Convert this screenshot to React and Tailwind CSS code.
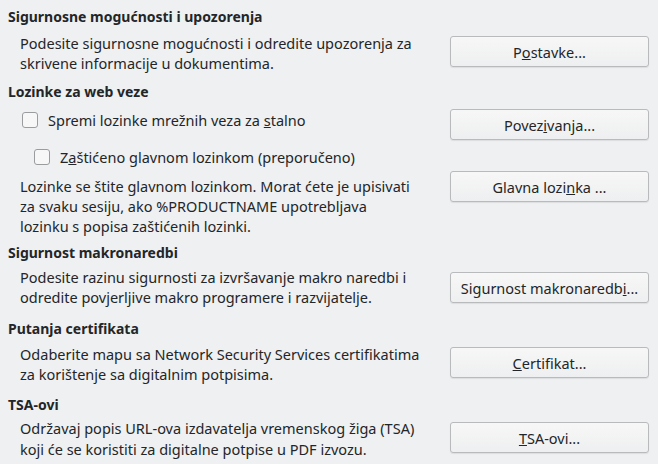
import React from "react";

function Btn({ children, className = "" }) {
  return (
    <button
      className={
        "w-[199px] h-[31px] shrink-0 rounded-[3px] border border-[#b8babc] bg-gradient-to-b from-[#f7f7f7] to-[#eeeff0] shadow-[0_1px_1px_rgba(0,0,0,0.08)] text-[14.5px] text-[#232629] leading-[20px] " +
        className
      }
    >
      {children}
    </button>
  );
}

function Check({ children, className = "" }) {
  return (
    <label className={"flex items-center h-[20px] " + className}>
      <span className="w-[16px] h-[16px] rounded-[3px] border border-[#9a9c9e] bg-[#f7f7f7] shrink-0" />
      <span className="ml-[10px]">{children}</span>
    </label>
  );
}

export default function App() {
  return (
    <div className="w-[658px] h-[464px] bg-[#eff0f1] text-[#232629] text-[14.5px] leading-[20px] font-['Noto_Sans',sans-serif] overflow-hidden flex flex-col">
      <h2 className="font-bold text-[14px] pl-[8px] mt-[7px]">Sigurnosne mogućnosti i upozorenja</h2>
      <div className="flex items-start pl-[20px] pr-[9px] mt-[6px]">
        <p className="flex-1">
          Podesite sigurnosne mogućnosti i odredite upozorenja za
          <br />
          skrivene informacije u dokumentima.
        </p>
        <Btn className="mt-[3px]">
          P<u>o</u>stavke...
        </Btn>
      </div>

      <h2 className="font-bold text-[14px] pl-[8px] mt-[9px]">Lozinke za web veze</h2>
      <div className="flex items-start pl-[22px] pr-[9px] mt-[7px]">
        <Check className="flex-1 mt-[1px]">
          Spremi lozinke mrežnih veza za <u>s</u>talno
        </Check>
        <Btn>
          Povez<u>i</u>vanja...
        </Btn>
      </div>
      <Check className="pl-[34px] mt-[7px]">
        Z<u>a</u>štićeno glavnom lozinkom (preporučeno)
      </Check>
      <div className="flex items-start pl-[20px] pr-[9px] mt-[4px]">
        <p className="flex-1 mt-[5px]">
          Lozinke se štite glavnom lozinkom. Morat ćete je upisivati
          <br />
          za svaku sesiju, ako %PRODUCTNAME upotrebljava
          <br />
          lozinku s popisa zaštićenih lozinki.
        </p>
        <Btn>
          Glavna lozi<u>n</u>ka ...
        </Btn>
      </div>

      <h2 className="font-bold text-[14px] pl-[8px] mt-[7px]">Sigurnost makronaredbi</h2>
      <div className="flex items-start pl-[20px] pr-[9px] mt-[4px]">
        <p className="flex-1">
          Podesite razinu sigurnosti za izvršavanje makro naredbi i
          <br />
          odredite povjerljive makro programere i razvijatelje.
        </p>
        <Btn className="mt-[5px]">
          Sigurnost makronaredb<u>i</u>...
        </Btn>
      </div>

      <h2 className="font-bold text-[14px] pl-[8px] mt-[12px]">Putanja certifikata</h2>
      <div className="flex items-start pl-[20px] pr-[9px] mt-[5px]">
        <p className="flex-1">
          Odaberite mapu sa Network Security Services certifikatima
          <br />
          za korištenje sa digitalnim potpisima.
        </p>
        <Btn className="mt-[3px]">
          <u>C</u>ertifikat...
        </Btn>
      </div>

      <h2 className="font-bold text-[14px] pl-[8px] mt-[11px]">TSA-ovi</h2>
      <div className="flex items-start pl-[20px] pr-[9px] mt-[3px]">
        <p className="flex-1 leading-[21px]">
          Održavaj popis URL-ova izdavatelja vremenskog žiga (TSA)
          <br />
          koji će se koristiti za digitalne potpise u PDF izvozu.
        </p>
        <Btn className="mt-[4px]">
          <u>T</u>SA-ovi...
        </Btn>
      </div>
    </div>
  );
}
